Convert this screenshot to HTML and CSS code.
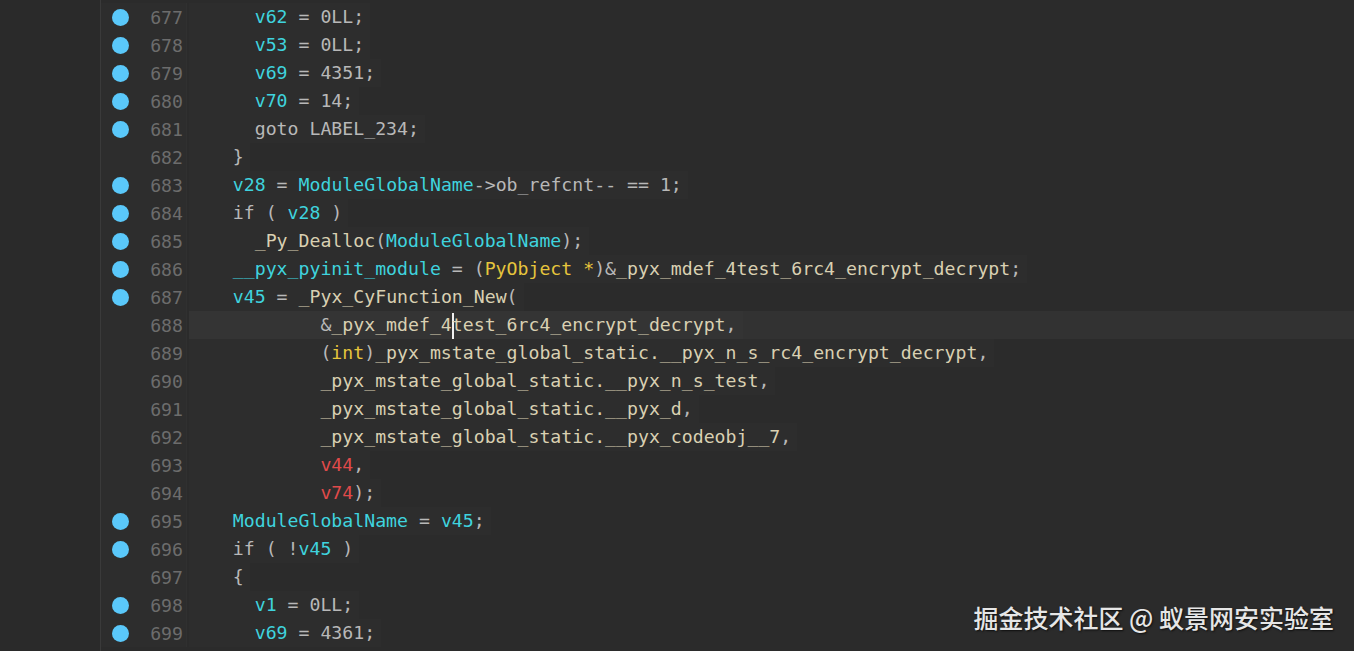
FILE: index.html
```html
<!DOCTYPE html>
<html lang="en">
<head>
<meta charset="utf-8">
<title>Pseudocode</title>
<link rel="stylesheet" href="styles.css">
</head>
<body>
<div class="app">
  <aside class="side"></aside>
  <main class="editor">
    <div class="row"><div class="gutter"><span class="bp on"></span><span class="ln">677</span></div><div class="code"><span class="t">      <span class="v">v62</span> = 0LL;</span></div></div>
    <div class="row"><div class="gutter"><span class="bp on"></span><span class="ln">678</span></div><div class="code"><span class="t">      <span class="v">v53</span> = 0LL;</span></div></div>
    <div class="row"><div class="gutter"><span class="bp on"></span><span class="ln">679</span></div><div class="code"><span class="t">      <span class="v">v69</span> = 4351;</span></div></div>
    <div class="row"><div class="gutter"><span class="bp on"></span><span class="ln">680</span></div><div class="code"><span class="t">      <span class="v">v70</span> = 14;</span></div></div>
    <div class="row"><div class="gutter"><span class="bp on"></span><span class="ln">681</span></div><div class="code"><span class="t">      goto LABEL_234;</span></div></div>
    <div class="row"><div class="gutter"><span class="bp"></span><span class="ln">682</span></div><div class="code"><span class="t">    }</span></div></div>
    <div class="row"><div class="gutter"><span class="bp on"></span><span class="ln">683</span></div><div class="code"><span class="t">    <span class="v">v28</span> = <span class="v">ModuleGlobalName</span>-&gt;ob_refcnt-- == 1;</span></div></div>
    <div class="row"><div class="gutter"><span class="bp on"></span><span class="ln">684</span></div><div class="code"><span class="t">    if ( <span class="v">v28</span> )</span></div></div>
    <div class="row"><div class="gutter"><span class="bp on"></span><span class="ln">685</span></div><div class="code"><span class="t">      <span class="f">_Py_Dealloc</span>(<span class="v">ModuleGlobalName</span>);</span></div></div>
    <div class="row"><div class="gutter"><span class="bp on"></span><span class="ln">686</span></div><div class="code"><span class="t">    <span class="v">__pyx_pyinit_module</span> = (<span class="y">PyObject *</span>)&amp;<span class="f">_pyx_mdef_4test_6rc4_encrypt_decrypt</span>;</span></div></div>
    <div class="row"><div class="gutter"><span class="bp on"></span><span class="ln">687</span></div><div class="code"><span class="t">    <span class="v">v45</span> = <span class="f">_Pyx_CyFunction_New</span>(</span></div></div>
    <div class="row"><div class="gutter"><span class="bp"></span><span class="ln">688</span></div><div class="code current"><span class="t">            &amp;<span class="f">_pyx_mdef_4<span class="caret"></span>test_6rc4_encrypt_decrypt</span>,</span></div></div>
    <div class="row"><div class="gutter"><span class="bp"></span><span class="ln">689</span></div><div class="code"><span class="t">            (<span class="y">int</span>)<span class="f">_pyx_mstate_global_static.__pyx_n_s_rc4_encrypt_decrypt</span>,</span></div></div>
    <div class="row"><div class="gutter"><span class="bp"></span><span class="ln">690</span></div><div class="code"><span class="t">            <span class="f">_pyx_mstate_global_static.__pyx_n_s_test</span>,</span></div></div>
    <div class="row"><div class="gutter"><span class="bp"></span><span class="ln">691</span></div><div class="code"><span class="t">            <span class="f">_pyx_mstate_global_static.__pyx_d</span>,</span></div></div>
    <div class="row"><div class="gutter"><span class="bp"></span><span class="ln">692</span></div><div class="code"><span class="t">            <span class="f">_pyx_mstate_global_static.__pyx_codeobj__7</span>,</span></div></div>
    <div class="row"><div class="gutter"><span class="bp"></span><span class="ln">693</span></div><div class="code"><span class="t">            <span class="r">v44</span>,</span></div></div>
    <div class="row"><div class="gutter"><span class="bp"></span><span class="ln">694</span></div><div class="code"><span class="t">            <span class="r">v74</span>);</span></div></div>
    <div class="row"><div class="gutter"><span class="bp on"></span><span class="ln">695</span></div><div class="code"><span class="t">    <span class="v">ModuleGlobalName</span> = <span class="v">v45</span>;</span></div></div>
    <div class="row"><div class="gutter"><span class="bp on"></span><span class="ln">696</span></div><div class="code"><span class="t">    if ( !<span class="v">v45</span> )</span></div></div>
    <div class="row"><div class="gutter"><span class="bp"></span><span class="ln">697</span></div><div class="code"><span class="t">    {</span></div></div>
    <div class="row"><div class="gutter"><span class="bp on"></span><span class="ln">698</span></div><div class="code"><span class="t">      <span class="v">v1</span> = 0LL;</span></div></div>
    <div class="row"><div class="gutter"><span class="bp on"></span><span class="ln">699</span></div><div class="code"><span class="t">      <span class="v">v69</span> = 4361;</span></div></div>
  </main>
  <div class="watermark">掘金技术社区 @ 蚁景网安实验室</div>
</div>
</body>
</html>
```
FILE: styles.css
```css
html, body {
  margin: 0;
  padding: 0;
  background: #2b2b2b;
  overflow: hidden;
}

.app {
  position: relative;
  display: flex;
  width: 1354px;
  height: 651px;
  overflow: hidden;
}

.side {
  width: 100px;
  flex: none;
  background: #2a2a2a;
  border-right: 1px solid #3a3a3a;
}

.editor {
  flex: 1;
  display: flex;
  flex-direction: column;
  padding-top: 3px;
  background: #2b2b2b;
}

.row {
  display: flex;
  height: 28px;
  flex: none;
}

.gutter {
  width: 85px;
  flex: none;
  display: flex;
  align-items: center;
  background: #2d2d2d;
  border-right: 1px solid #303030;
}

.bp {
  width: 17px;
  height: 17px;
  margin-left: 11px;
  border-radius: 50%;
  flex: none;
}

.bp.on {
  background: #5ac8fa;
}

.ln {
  flex: 1;
  text-align: right;
  padding-right: 3px;
  font-family: "DejaVu Sans Mono", monospace;
  font-size: 18.2px;
  color: #6c6c6c;
}

.code {
  flex: 1;
  margin-left: 2px;
  display: flex;
  align-items: center;
  font-family: "DejaVu Sans Mono", monospace;
  font-size: 18.2px;
  color: #b8b8b8;
  white-space: pre;
}

.code.current {
  background: #323232;
}

.t {
  display: inline-block;
  line-height: 28px;
  padding-right: 6px;
  background: rgba(255, 255, 255, 0.012);
}

.v { color: #3fd3de; }
.f { color: #d9d0b2; }
.y { color: #e6c53c; }
.r { color: #e04a4a; }

.caret {
  display: inline-block;
  width: 2px;
  height: 26px;
  margin-right: -2px;
  vertical-align: middle;
  background: #f0f0f0;
}

.watermark {
  position: absolute;
  right: 20px;
  bottom: 18px;
  font-family: "Noto Sans CJK SC", "Noto Sans", sans-serif;
  font-size: 25px;
  font-weight: 500;
  line-height: 32px;
  color: #e6e6e6;
  text-shadow: 1px 1px 2px rgba(0, 0, 0, 0.7);
}
```
